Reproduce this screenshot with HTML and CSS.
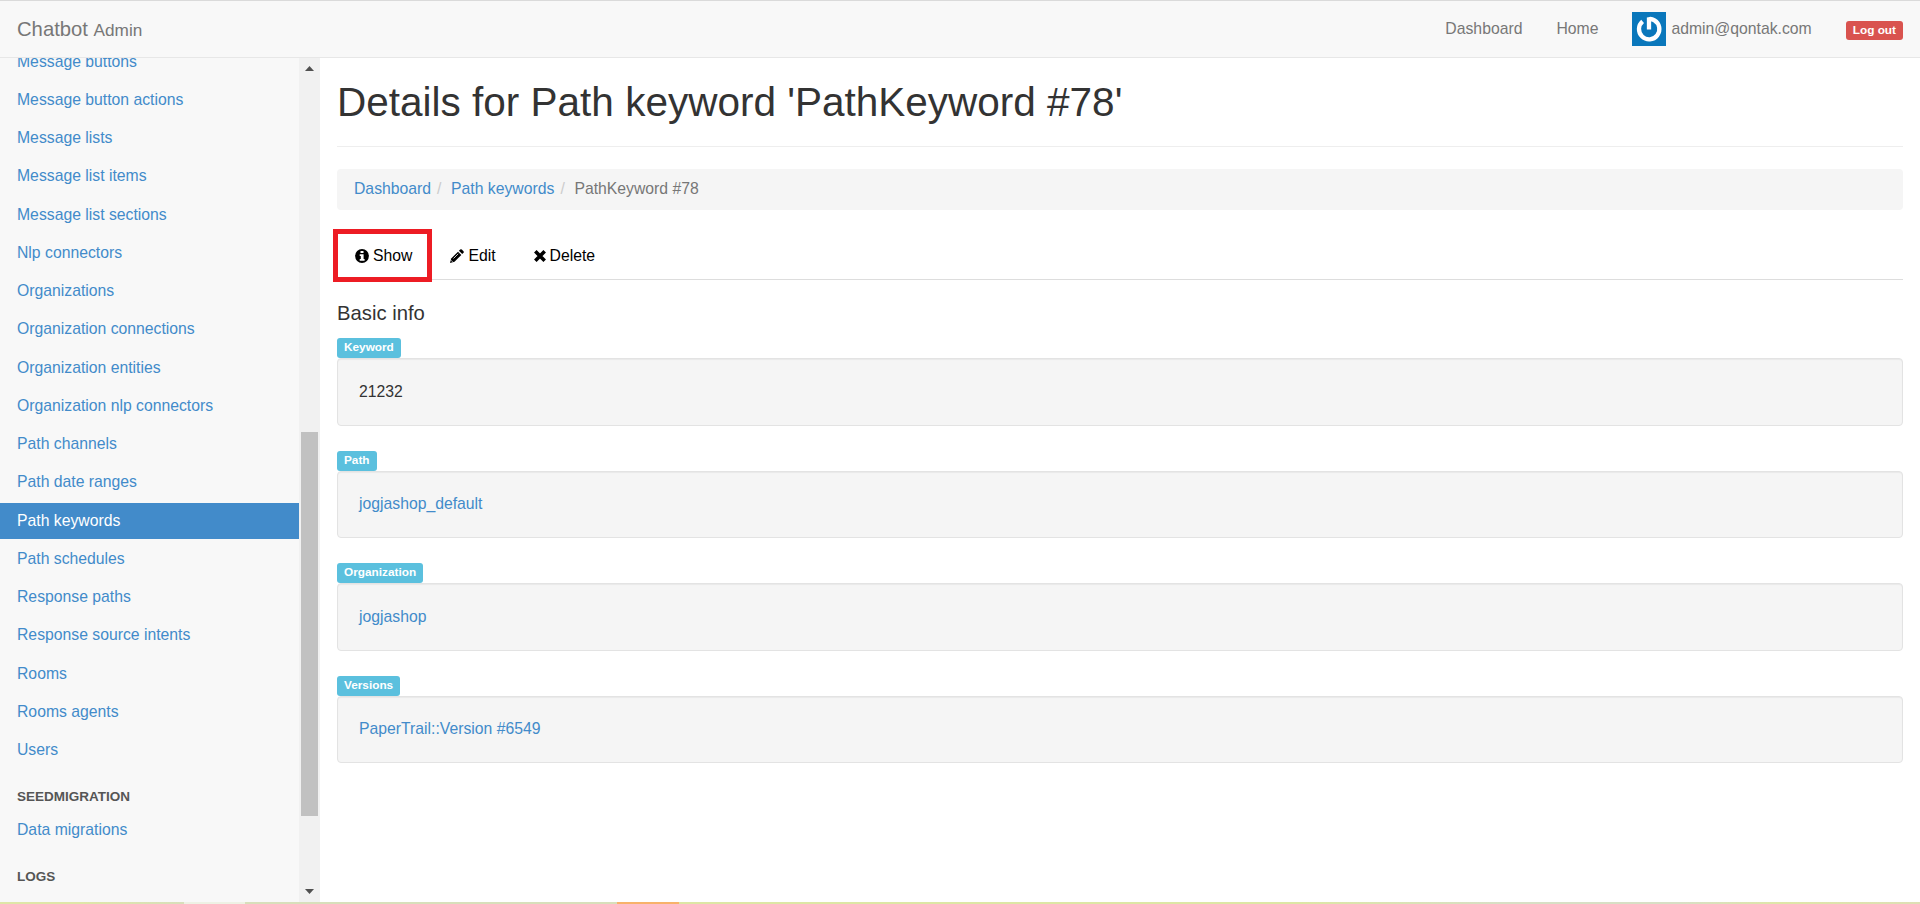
FILE: index.html
```html
<!DOCTYPE html>
<html lang="en">
<head>
<meta charset="utf-8">
<title>Chatbot Admin</title>
<link rel="stylesheet" href="styles.css">
</head>
<body>
<header class="navbar">
  <a class="brand">Chatbot <small>Admin</small></a>
  <nav class="topnav">
    <a class="link">Dashboard</a>
    <a class="link">Home</a>
    <a class="user">
      <svg class="avatar" viewBox="0 0 34 34"><rect width="34" height="34" fill="#0a77bb"/><path d="M10.600 9.300A10.200 10.200 0 1 0 22.500 8.400Q19.500 6.500 17 7.200V17.500" fill="none" stroke="#fff" stroke-width="4.300"/></svg>
      <span>admin@qontak.com</span>
    </a>
    <a class="logout">Log out</a>
  </nav>
</header>
<div class="layout">
  <aside class="sidebar">
    <ul class="menu">
      <li>Message buttons</li>
      <li>Message button actions</li>
      <li>Message lists</li>
      <li>Message list items</li>
      <li>Message list sections</li>
      <li>Nlp connectors</li>
      <li>Organizations</li>
      <li>Organization connections</li>
      <li>Organization entities</li>
      <li>Organization nlp connectors</li>
      <li>Path channels</li>
      <li>Path date ranges</li>
      <li class="active">Path keywords</li>
      <li>Path schedules</li>
      <li>Response paths</li>
      <li>Response source intents</li>
      <li>Rooms</li>
      <li>Rooms agents</li>
      <li>Users</li>
      <li class="heading">Seedmigration</li>
      <li>Data migrations</li>
      <li class="heading">Logs</li>
    </ul>
    <div class="scrollbar">
      <svg class="arrow" viewBox="0 0 9 5"><path d="M0 5L4.500 0L9 5Z" fill="#505050"/></svg>
      <div class="track"><div class="thumb"></div></div>
      <svg class="arrow" viewBox="0 0 9 5"><path d="M0 0L4.500 5L9 0Z" fill="#505050"/></svg>
    </div>
  </aside>
  <main class="content">
    <h1>Details for Path keyword 'PathKeyword #78'</h1>
    <div class="breadcrumb"><a>Dashboard</a><i>/</i><a>Path keywords</a><i>/</i><span>PathKeyword #78</span></div>
    <div class="tabs">
      <a class="tab marked"><svg class="info" viewBox="0 0 14 14"><circle cx="7" cy="7" r="6.900"/><path d="M5.500 2h3v2h-3zM4.700 5.300h3.900v4.700h1v1.800H4.700V10h1.100V7H4.700z" fill="#fff"/></svg>Show</a>
      <a class="tab"><svg class="pencil" viewBox="0 0 14 14"><path d="M0 14L1.200 9.500L8 2.700L11.300 6L4.500 12.800Z"/><path d="M8.900 1.800L10.200.5Q11-.2 11.800.5L13.500 2.200Q14.200 3 13.500 3.800L12.200 5.100Z"/><path d="M1.100 11.300L2.600 12.800M3.500 9.500L8.200 4.800" stroke="#fff" stroke-width=".8"/></svg>Edit</a>
      <a class="tab"><svg class="cross" viewBox="0 0 11 11"><path d="M1.200 1.200L9.800 9.800M9.800 1.200L1.200 9.800" stroke="#000" stroke-width="3.300"/></svg>Delete</a>
    </div>
    <h4>Basic info</h4>
    <section class="field"><b>Keyword</b><div class="well">21232</div></section>
    <section class="field"><b>Path</b><div class="well"><a>jogjashop_default</a></div></section>
    <section class="field"><b>Organization</b><div class="well"><a>jogjashop</a></div></section>
    <section class="field"><b>Versions</b><div class="well"><a>PaperTrail::Version #6549</a></div></section>
  </main>
</div>
<footer class="strip"></footer>
</body>
</html>
```
FILE: styles.css
```css
* { box-sizing: border-box; }
body {
  margin: 0;
  height: 904px;
  display: flex;
  flex-direction: column;
  overflow: hidden;
  background: #fff;
  color: #333;
  font: 15.75px/22.5px "Liberation Sans", Arial, sans-serif;
}
.navbar {
  flex: none;
  height: 58px;
  display: flex;
  justify-content: space-between;
  padding: 0 17px;
  background: #f8f8f8;
  border-top: 1px solid #dadada;
  border-bottom: 1px solid #e7e7e7;
  color: #777;
}
.brand { font-size: 20.25px; line-height: 56px; }
.brand small { font-size: 17.2px; }
.topnav { display: flex; align-items: center; }
.link { margin-right: 34px; }
.user { display: flex; align-items: center; gap: 5px; margin-right: 34px; }
.avatar { width: 34px; height: 34px; }
.logout {
  height: 19px;
  margin-top: 3px;
  padding: 0 7px;
  border-radius: 3px;
  background: #d9534f;
  color: #fff;
  font-size: 11.8px;
  font-weight: bold;
  line-height: 18px;
}
.layout { flex: 1; min-height: 0; display: flex; }
.sidebar { width: 320px; display: flex; background: #f8f8f8; overflow: hidden; }
.menu { flex: 1; margin: -14.45px 0 0; padding: 0; list-style: none; color: #428bca; }
.menu li { height: 36px; margin-bottom: 2.25px; padding: 7px 17px; }
.menu .active { background: #428bca; color: #fff; }
.menu .heading {
  height: 31.5px;
  margin-top: 12px;
  margin-bottom: 0;
  padding-top: 6px;
  color: #555;
  font-size: 13.5px;
  font-weight: bold;
  text-transform: uppercase;
}
.scrollbar {
  width: 21px;
  display: flex;
  flex-direction: column;
  align-items: center;
  padding: 8px 0;
  background: #f1f1f1;
}
.arrow { width: 9px; height: 5px; }
.track { flex: 1; width: 17px; }
.thumb { height: 384px; margin-top: 361px; background: #c1c1c1; }
.content { flex: 1; padding: 0 17px; }
h1 {
  height: 89px;
  margin: 0 0 22px;
  padding-top: 22px;
  border-bottom: 1px solid #eee;
  font-size: 40.5px;
  font-weight: 500;
  line-height: 45px;
}
.breadcrumb {
  height: 41px;
  display: flex;
  padding: 9px 17px;
  border-radius: 4px;
  background: #f5f5f5;
  color: #777;
}
.breadcrumb i { width: 20px; padding-left: 6px; color: #ccc; font-style: normal; }
a { text-decoration: none; }
.breadcrumb a, .well a { color: #428bca; }
.tabs {
  height: 60px;
  display: flex;
  margin-top: 10px;
  padding-top: 10px;
  border-bottom: 1px solid #ddd;
}
.tab { display: flex; align-items: center; padding: 0 19px; color: #000; gap: 4px; height: 52px; }
.marked { margin: -1px -1px 0 -4px; padding: 1px 15px 0 17px; border: 5px solid #ed1c24; height: 53px; }
.info { width: 14px; height: 14px; }
.pencil { width: 14px; height: 14px; }
.cross { width: 12px; height: 12px; }
h4 { margin: 22px 0 13px; font-size: 20.25px; font-weight: 500; line-height: 23px; }
.field { height: 112.6px; }
.field b {
  display: block;
  width: fit-content;
  height: 20px;
  padding: 0 7px;
  border-radius: 3px;
  background: #5bc0de;
  color: #fff;
  font-size: 11.8px;
  line-height: 18px;
}
.well {
  height: 67.5px;
  padding: 21.5px 21px;
  border: 1px solid #e3e3e3;
  border-radius: 4px;
  background: #f5f5f5;
  box-shadow: inset 0 1px 1px rgba(0, 0, 0, .05);
}
.strip {
  flex: none;
  height: 2px;
  background: linear-gradient(90deg, #dfe6a8 0 80px, #d8dfbb 184px, #eef1e4 184px 245px, #d8dfbb 245px 617px, #f8b26a 617px 679px, #dde6a5 679px 1300px, #d8dfc5 1500px 1680px, #dfe6a8 1780px, #dedfb5);
}
```
